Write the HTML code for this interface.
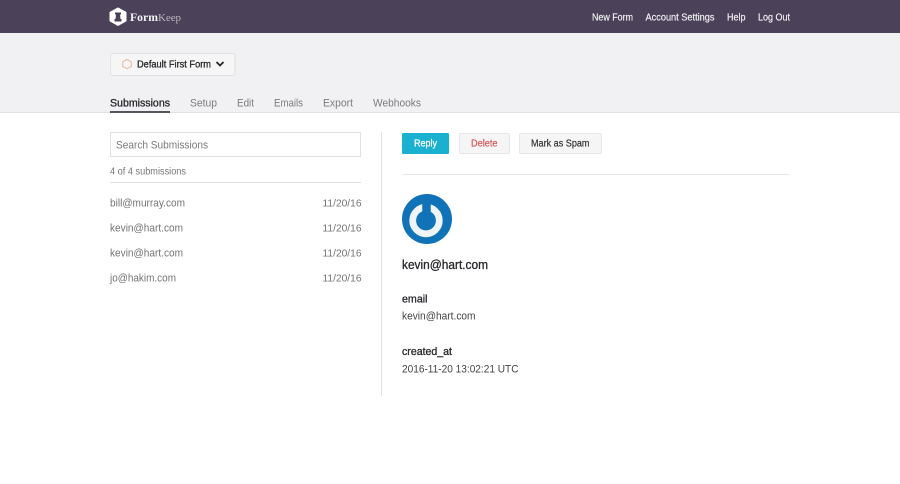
<!DOCTYPE html>
<html lang="en"><head><meta charset="utf-8"><title>FormKeep</title>
<style>
html,body{margin:0;padding:0;background:#fff;width:900px;height:484px;overflow:hidden}
svg{display:block}
text{font-family:"Liberation Sans",sans-serif;font-size:10.500px;fill:#6f6f6f}
.nav{fill:#f4f3f6;font-size:9.800px;stroke:#f4f3f6;stroke-width:.15}
.tab{fill:#7c7c7c;font-size:11px}
.list{fill:#747474;font-size:10.800px}
.date{fill:#747474;font-size:10.500px}
.dark{fill:#2a2a2e;stroke:#2a2a2e;stroke-width:.32}
.body{fill:#444448;font-size:10.800px}
</style></head><body>
<svg width="900" height="484" viewBox="0 0 900 484" xmlns="http://www.w3.org/2000/svg">
<rect width="900" height="484" fill="#fff"/>
<rect width="900" height="33" fill="#4b4259"/>
<rect y="33" width="900" height="79" fill="#f1f1f3"/>
<rect y="112" width="900" height="1" fill="#e2e2e4"/>

<path d="M118 8l8 4.3v8.6l-8 4.500-8-4.500v-8.600z" fill="#fff" stroke="#fff" stroke-linejoin="round"/>
<path d="M115 12.500h6v2h-1l.5 4.500h1v2.500h-7v-2.500h1l.5-4.500h-1z" fill="#4b4259"/>
<text x="130" y="21" textLength="28" style="font-family:'Liberation Serif',serif;font-weight:bold;font-size:11.700px;fill:#f3f2f5">Form</text>
<text x="158" y="21" textLength="23" style="font-family:'Liberation Serif',serif;font-size:11px;fill:#b9b5c1">Keep</text>

<text class="nav" x="592" y="20.500" textLength="41" lengthAdjust="spacingAndGlyphs">New Form</text>
<text class="nav" x="645.500" y="20.500" textLength="69" lengthAdjust="spacingAndGlyphs">Account Settings</text>
<text class="nav" x="727" y="20.500" textLength="18.500" lengthAdjust="spacingAndGlyphs">Help</text>
<text class="nav" x="758" y="20.500" textLength="32" lengthAdjust="spacingAndGlyphs">Log Out</text>

<rect x="110.500" y="53.500" width="124.500" height="22" rx="2" fill="#f6f6f7" stroke="#e1e1e3"/>
<path d="M127 59.500l4.300 2.300v4.600l-4.300 2.300-4.300-2.300v-4.600z" fill="none" stroke="#e8b9a0" stroke-width="1"/>
<text class="dark" x="137" y="67.400" textLength="74" lengthAdjust="spacingAndGlyphs" style="font-size:10.200px">Default First Form</text>
<path d="M216.500 62l3.500 3.500 3.500-3.500" fill="none" stroke="#26262a" stroke-width="1.800"/>

<text class="dark" x="110" y="106.400" textLength="60" lengthAdjust="spacingAndGlyphs" style="font-size:11.200px">Submissions</text>
<rect x="110" y="111" width="60" height="2" fill="#55555c"/>
<text class="tab" x="190" y="106.400" textLength="27" lengthAdjust="spacingAndGlyphs">Setup</text>
<text class="tab" x="237" y="106.400" textLength="17" lengthAdjust="spacingAndGlyphs">Edit</text>
<text class="tab" x="274" y="106.400" textLength="29" lengthAdjust="spacingAndGlyphs">Emails</text>
<text class="tab" x="323" y="106.400" textLength="30" lengthAdjust="spacingAndGlyphs">Export</text>
<text class="tab" x="373" y="106.400" textLength="48" lengthAdjust="spacingAndGlyphs">Webhooks</text>

<rect x="110.500" y="132.500" width="250" height="24" fill="#fff" stroke="#e0e0e2"/>
<text x="116" y="148.300" textLength="92" lengthAdjust="spacingAndGlyphs" style="font-size:10.900px;fill:#7a7a7a">Search Submissions</text>
<text x="110" y="174.400" textLength="76" lengthAdjust="spacingAndGlyphs" style="font-size:9.800px;fill:#747474">4 of 4 submissions</text>
<rect x="110" y="182" width="251" height="1" fill="#e0e0e2"/>

<text class="list" x="110" y="206.600" textLength="75" lengthAdjust="spacingAndGlyphs">bill@murray.com</text>
<text class="date" x="322.500" y="206.600" textLength="39" lengthAdjust="spacingAndGlyphs">11/20/16</text>
<text class="list" x="110" y="231.600" textLength="73" lengthAdjust="spacingAndGlyphs">kevin@hart.com</text>
<text class="date" x="322.500" y="231.600" textLength="39" lengthAdjust="spacingAndGlyphs">11/20/16</text>
<text class="list" x="110" y="256.600" textLength="73" lengthAdjust="spacingAndGlyphs">kevin@hart.com</text>
<text class="date" x="322.500" y="256.600" textLength="39" lengthAdjust="spacingAndGlyphs">11/20/16</text>
<text class="list" x="110" y="281.600" textLength="66" lengthAdjust="spacingAndGlyphs">jo@hakim.com</text>
<text class="date" x="322.500" y="281.600" textLength="39" lengthAdjust="spacingAndGlyphs">11/20/16</text>

<rect x="381" y="132" width="1" height="264" fill="#e2e2e4"/>

<rect x="402" y="133" width="47" height="21" rx="1.500" fill="#1ab0d0"/>
<text x="414" y="146.400" textLength="23" lengthAdjust="spacingAndGlyphs" style="font-size:9.700px;fill:#fff;stroke:#fff;stroke-width:.25">Reply</text>
<rect x="459.500" y="133.500" width="50" height="20" rx="1.500" fill="#f5f5f6" stroke="#e6e6e8"/>
<text x="471" y="146.400" textLength="26.500" lengthAdjust="spacingAndGlyphs" style="font-size:9.800px;fill:#cf5a5c;stroke:#cf5a5c;stroke-width:.2">Delete</text>
<rect x="519.500" y="133.500" width="82" height="20" rx="1.500" fill="#f5f5f6" stroke="#e6e6e8"/>
<text x="531" y="146.400" textLength="58.500" lengthAdjust="spacingAndGlyphs" style="font-size:9.700px;fill:#333;stroke:#333;stroke-width:.2">Mark as Spam</text>
<rect x="402" y="174" width="388" height="1" fill="#e6e6e8"/>

<circle cx="427" cy="219" r="25" fill="#1173b7"/>
<circle cx="426" cy="220.500" r="13.300" fill="none" stroke="#eff4f8" stroke-width="6.800"/>
<path d="M426.500 202v17" stroke="#1173b7" stroke-width="8.500" stroke-linecap="round"/>

<text class="dark" x="402" y="268.800" textLength="86" lengthAdjust="spacingAndGlyphs" style="font-size:12.500px">kevin@hart.com</text>
<text class="dark" x="402" y="302.300" textLength="25.500" lengthAdjust="spacingAndGlyphs" style="font-size:11px">email</text>
<text class="body" x="402" y="319.700" textLength="73.500" lengthAdjust="spacingAndGlyphs">kevin@hart.com</text>
<text class="dark" x="402" y="354.800" textLength="50" lengthAdjust="spacingAndGlyphs" style="font-size:11px">created_at</text>
<text class="body" x="402" y="372.700" textLength="116.500" lengthAdjust="spacingAndGlyphs" style="font-size:10.700px">2016-11-20 13:02:21 UTC</text>
</svg>
</body></html>
